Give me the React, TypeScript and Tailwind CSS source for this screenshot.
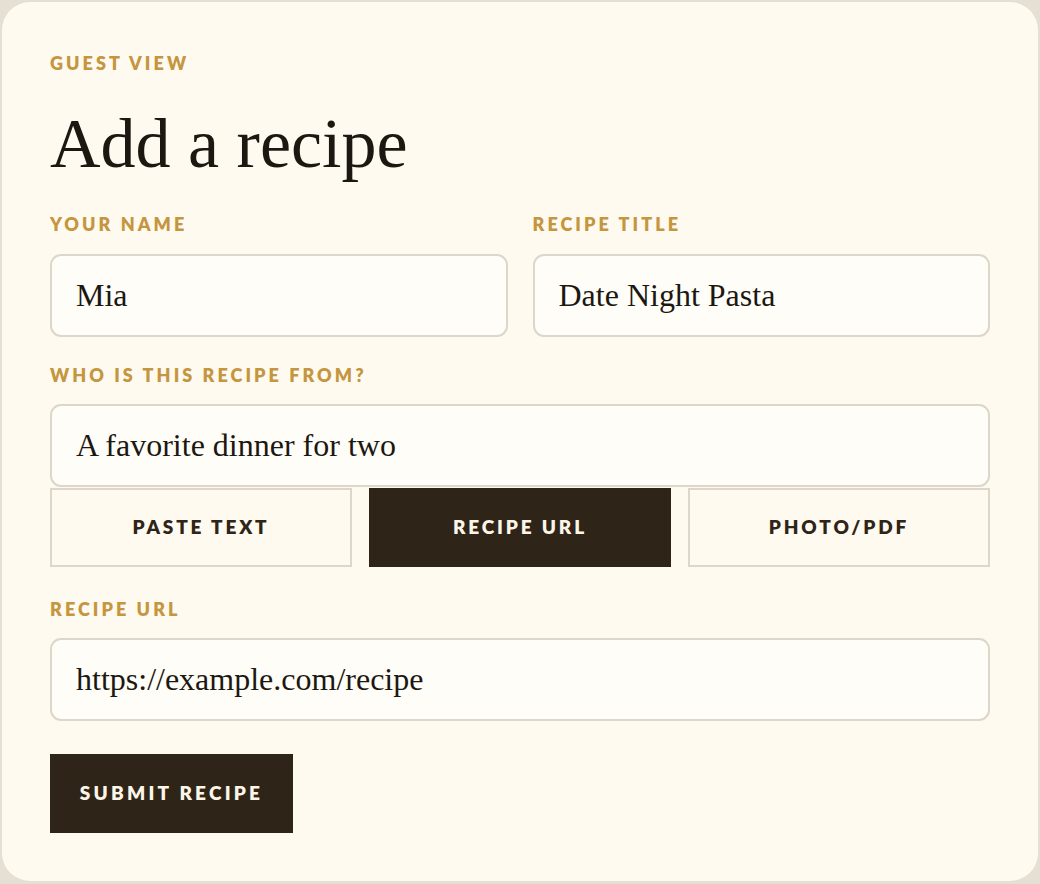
import { useState } from 'react'

const labelClass =
  "block font-['Lato',sans-serif] font-extrabold text-[18px] leading-[20px] tracking-[0.17em] text-[#c4963f] uppercase"

const inputClass =
  "w-full h-[83px] rounded-[11px] border-2 border-[#dcd6cb] bg-[#fffdf8] pl-[24px] pr-4 font-['Liberation_Serif',serif] text-[32px] text-[#1c1811] outline-none"

export default function App() {
  const [name, setName] = useState('Mia')
  const [title, setTitle] = useState('Date Night Pasta')
  const [from, setFrom] = useState('A favorite dinner for two')
  const [url, setUrl] = useState('https://example.com/recipe')
  const [mode, setMode] = useState('url')

  const tabs = [
    { id: 'text', label: 'Paste text' },
    { id: 'url', label: 'Recipe URL' },
    { id: 'file', label: 'Photo/PDF' },
  ]

  return (
    <div className="min-h-[884px] bg-[#e6dfd3] p-[2px]">
      <div className="rounded-[28px] bg-[#fffaef] px-[48px] pt-[51px] pb-[48px]">
        <div className={labelClass}>Guest view</div>
        <h1 className="mt-[36px] font-['Liberation_Serif',serif] text-[70px] leading-[70px] text-[#1c1811]">
          Add a recipe
        </h1>

        {/* Name + title */}
        <div className="mt-[35px] grid grid-cols-2 gap-[25px]">
          <div>
            <label className={labelClass}>Your name</label>
            <input
              className={`${inputClass} mt-[20px]`}
              value={name}
              onChange={(e) => setName(e.target.value)}
            />
          </div>
          <div>
            <label className={labelClass}>Recipe title</label>
            <input
              className={`${inputClass} mt-[20px]`}
              value={title}
              onChange={(e) => setTitle(e.target.value)}
            />
          </div>
        </div>

        <label className={`${labelClass} mt-[28px]`}>Who is this recipe from?</label>
        <input
          className={`${inputClass} mt-[19px]`}
          value={from}
          onChange={(e) => setFrom(e.target.value)}
        />

        {/* Source tabs */}
        <div className="mt-px grid grid-cols-3 gap-[17px]">
          {tabs.map((t) => (
            <button
              key={t.id}
              onClick={() => setMode(t.id)}
              className={`h-[79px] font-['Lato',sans-serif] font-extrabold text-[19px] tracking-[0.15em] uppercase ${
                mode === t.id
                  ? 'bg-[#2e2418] text-[#fdf6e8]'
                  : 'border-2 border-[#dcd6cb] bg-[#fffaef] text-[#2e2418]'
              }`}
            >
              {t.label}
            </button>
          ))}
        </div>

        <label className={`${labelClass} mt-[32px]`}>Recipe URL</label>
        <input
          className={`${inputClass} mt-[19px]`}
          value={url}
          onChange={(e) => setUrl(e.target.value)}
        />

        <button className="mt-[33px] h-[79px] w-[243px] bg-[#2e2418] font-['Lato',sans-serif] font-extrabold text-[19px] tracking-[0.17em] text-[#fdf6e8] uppercase">
          Submit recipe
        </button>
      </div>
    </div>
  )
}
